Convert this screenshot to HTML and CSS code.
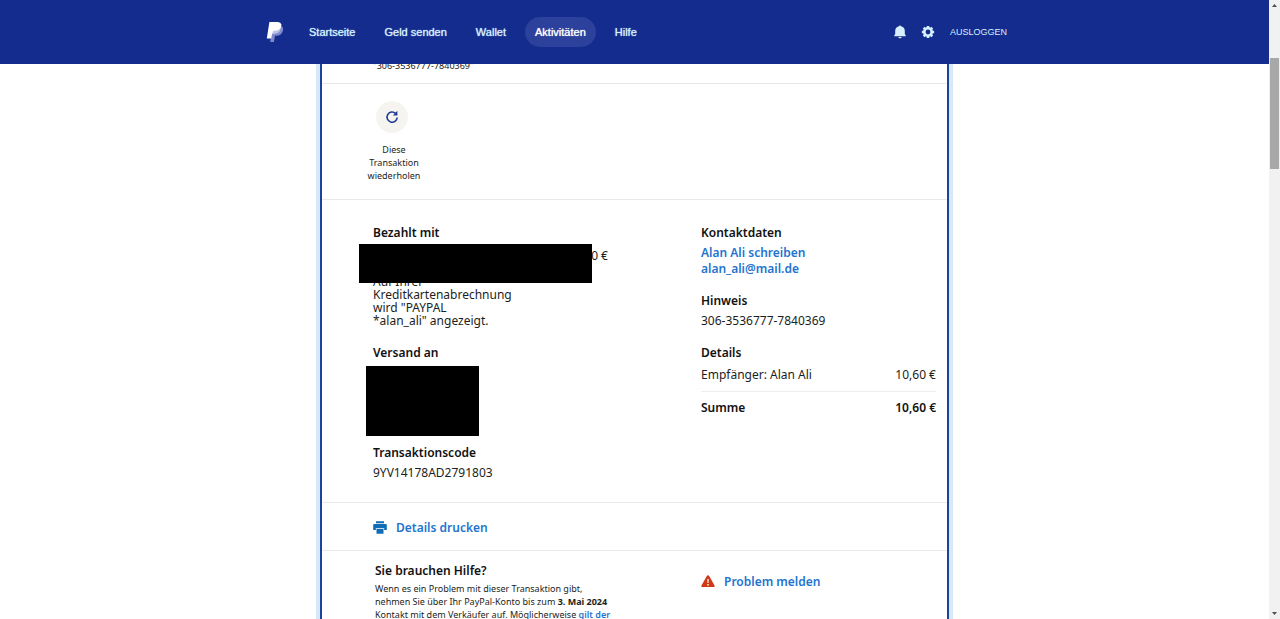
FILE: index.html
```html
<!DOCTYPE html>
<html lang="de">
<head>
<meta charset="utf-8">
<title>PayPal: Aktivitäten</title>
<link rel="stylesheet" href="styles.css">
</head>
<body>
<div class="window">
  <div class="page">
    <header class="topbar">
      <div class="topbar-inner">
        <a class="logo" href="#" aria-label="PayPal">
          <svg width="18" height="22" viewBox="0 0 18 22" aria-hidden="true">
            <path fill="#8088cc" d="M5.500 13 7 5h8.500c1.400 1 1.900 2.600 1.500 4.500-.8 3.600-3.300 5.200-6.800 5.200H9L7.900 21H4.200z"/>
            <path fill="#b9bfe6" d="M5.500 13 7 5h8c.2 5-2.600 8-7.400 8H5.500z"/>
            <path fill="#fff" d="M3.400 1h7.800c2.500 0 4 1 4.100 3H8.500L7 11.500H6.400L5.200 17.500H.8z"/>
            <path fill="#fff" d="M8 3h7.300c.2 4.500-2.400 6.800-6.500 6.800H6.500z"/>
          </svg>
        </a>
        <nav class="nav">
          <a href="#">Startseite</a>
          <a href="#">Geld senden</a>
          <a href="#">Wallet</a>
          <a class="active" href="#">Aktivitäten</a>
          <a href="#">Hilfe</a>
        </nav>
        <div class="tools">
          <button type="button" aria-label="Mitteilungen">
            <svg width="12" height="14" viewBox="0 0 12 14" aria-hidden="true"><path d="M6 .5c.6 0 1 .4 1.100.8C9.700 1.900 10.800 3.800 10.800 6v3l.9 1.200v1H.3v-1L1.200 9V6c0-2.200 1.100-4.100 3.700-4.700C5 .9 5.400.5 6 .5zM4.300 12h3.400c-.2.800-.8 1.300-1.700 1.300S4.500 12.800 4.300 12z"/></svg>
          </button>
          <button type="button" aria-label="Einstellungen">
            <svg width="14" height="14" viewBox="0 0 14 14" aria-hidden="true"><circle cx="7" cy="7" r="3.700" fill="none" stroke="#d5f0fc" stroke-width="2.600"/><path stroke="#d5f0fc" stroke-width="2.600" d="M7 .9v2M7 11.100v2M.9 7h2M11.100 7h2M2.700 2.700l1.400 1.400M9.900 9.900l1.400 1.400M2.700 11.300l1.400-1.400M9.900 4.100l1.400-1.400"/></svg>
          </button>
          <a class="logout" href="#">AUSLOGGEN</a>
        </div>
      </div>
    </header>
    <main class="content">
      <article class="card">
        <section class="note">"306-3536777-7840369"</section>
        <section class="repeat">
          <button type="button" class="repeat-button">
            <span class="repeat-icon">
              <svg width="14" height="14" viewBox="0 0 14 14" aria-hidden="true"><path fill="none" stroke="#1f3a93" stroke-width="1.600" d="M10.500 3.300A5.100 5.100 0 1 0 12.200 7.500"/><path fill="#1f3a93" d="M12.400.8v4.700H7.900l1.700-1.700 1.200-1.200z"/></svg>
            </span>
            <span>Diese Transaktion wiederholen</span>
          </button>
        </section>
        <section class="details">
          <div class="column">
            <div class="group paid">
              <h2>Bezahlt mit</h2>
              <p class="paid-amount">10,60 €</p>
              <p class="statement">Auf Ihrer Kreditkartenabrechnung wird "PAYPAL<br>*alan_ali" angezeigt.</p>
              <div class="redacted"></div>
            </div>
            <div class="group address">
              <h2>Versand an</h2>
              <div class="redacted-box"></div>
            </div>
            <div class="group">
              <h2>Transaktionscode</h2>
              <p>9YV14178AD2791803</p>
            </div>
          </div>
          <div class="column">
            <div class="group">
              <h2>Kontaktdaten</h2>
              <a href="#">Alan Ali schreiben</a>
              <a href="#">alan_ali@mail.de</a>
            </div>
            <div class="group">
              <h2>Hinweis</h2>
              <p>306-3536777-7840369</p>
            </div>
            <div class="group">
              <h2>Details</h2>
              <dl>
                <div class="row"><dt>Empfänger: Alan Ali</dt><dd>10,60 €</dd></div>
                <div class="row total"><dt>Summe</dt><dd>10,60 €</dd></div>
              </dl>
            </div>
          </div>
        </section>
        <section class="print">
          <a href="#">
            <svg width="14" height="14" viewBox="0 0 14 14" aria-hidden="true"><path fill="#0f6cb5" d="M3 .3h8v2H3zM1.500 3h11c.8 0 1.300.5 1.300 1.300V9h-2.600V7.300H2.800V9H.2V4.300C.2 3.500.7 3 1.500 3zM3.500 8.100h7v4.600h-7z"/></svg>
            Details drucken
          </a>
        </section>
        <section class="help">
          <div class="help-text">
            <h2>Sie brauchen Hilfe?</h2>
            <p>Wenn es ein Problem mit dieser Transaktion gibt, nehmen Sie über Ihr PayPal-Konto bis zum <strong>3. Mai 2024</strong> Kontakt mit dem Verkäufer auf. Möglicherweise <a href="#">gilt der</a></p>
          </div>
          <a class="report" href="#">
            <svg width="14" height="14" viewBox="0 0 14 14" aria-hidden="true"><path fill="#cf3a14" d="M7 .3c.6 0 .9.3 1.200.7l5.300 9.400c.5.900 0 1.700-.9 1.700H1.400c-.9 0-1.400-.8-.9-1.700L5.800 1c.3-.4.600-.7 1.200-.7z"/><path fill="#fff" d="M6.300 4h1.400l-.2 4H6.500zM6.300 9.100h1.400v1.400H6.300z"/></svg>
            Problem melden
          </a>
        </section>
      </article>
    </main>
  </div>
  <div class="scrollbar" aria-hidden="true">
    <svg width="11" height="11" viewBox="0 0 11 11"><path fill="#505050" d="M5.500 4 8 7H3z"/></svg>
    <div class="track"><div class="thumb"></div></div>
    <svg width="11" height="11" viewBox="0 0 11 11"><path fill="#505050" d="M3 4h5L5.500 7z"/></svg>
  </div>
</div>
</body>
</html>
```
FILE: styles.css
```css
* { box-sizing: border-box; }

body {
  margin: 0;
  background: #fff;
  color: #1c1e21;
  font: 12px/16px "Noto Sans", "Open Sans", sans-serif;
}

h2, p, dl, dd { margin: 0; }
h2 { font-size: 12px; line-height: 16px; font-weight: 600; color: #111; }
a { color: #2374cf; font-weight: 600; text-decoration: none; }
button { padding: 0; border: 0; background: none; font: inherit; color: inherit; cursor: pointer; }
svg { display: block; flex: none; }

.window { display: flex; height: 100vh; overflow: hidden; }
.page { flex: 1; display: flex; flex-direction: column; min-width: 0; }

.topbar { flex: none; position: relative; z-index: 1; background: #142c8e; font-family: "Liberation Sans", Arial, sans-serif; }
.topbar-inner { display: flex; align-items: center; max-width: 745px; height: 64px; margin: 0 auto; padding-left: 4px; }
.topbar a { color: #d5f0fc; font-size: 11px; font-weight: 400; }
.nav { display: flex; gap: 9px; margin-left: 15px; }
.nav a { padding: 7px 10px; border-radius: 16px; }
.topbar .nav .active { background: #2b419b; color: #fff; }
.nav a { text-shadow: 0 0 1px currentColor; }
.tools { display: flex; align-items: center; gap: 15px; margin-left: auto; fill: #d5f0fc; }
.topbar .logout { font-size: 9px; }

.content { flex: 1; min-height: 0; }
.card {
  max-width: 629px;
  margin: -8px auto 0;
  border: 2px solid #1a449a;
  border-top: 0;
  box-shadow: 0 0 0 4px #d8e8f9;
}
.card > section { border-bottom: 1px solid #e9e9e9; padding-left: 51px; }

.note { padding-top: 3px; padding-bottom: 11px; font-size: 9px; line-height: 13px; }

.card > .repeat { padding: 17px 0 16px 44px; }
.repeat-button { width: 56px; font-size: 9px; line-height: 13px; text-align: center; }
.repeat-icon {
  display: flex;
  align-items: center;
  justify-content: center;
  width: 32px;
  height: 32px;
  margin: 0 0 10px 10px;
  border-radius: 50%;
  background: #f5f4f0;
}

.details { display: grid; grid-template-columns: 235px 235px; gap: 93px; padding-top: 25px; padding-bottom: 21px; }
.group { margin-bottom: 16px; }
.group:last-child { margin-bottom: 0; }
.group h2 { margin-bottom: 4px; }
.group a { display: block; }

.column .paid { position: relative; margin-bottom: 18px; }
.paid-amount { margin-bottom: 11px; padding-top: 3px; text-align: right; }
.statement { width: 140px; line-height: 13px; }
.redacted { position: absolute; top: 19px; left: -14px; width: 233px; height: 39px; background: #000; }
.redacted-box { width: 113px; height: 70px; margin: 0 0 9px -7px; background: #000; }
.column .address { margin-bottom: 8px; }
.address h2 { margin-bottom: 5px; }

.row { display: flex; justify-content: space-between; }
.row { padding: 2px 0 8px; border-bottom: 1px solid #eee; }
.total { padding: 8px 0; border: 0; font-weight: 600; color: #111; }

.print { display: flex; padding-top: 17px; padding-bottom: 14px; }
.print a, .report { display: flex; align-items: center; gap: 9px; }

.help { display: grid; grid-template-columns: 240px 1fr; gap: 88px; align-items: start; padding-top: 12px; padding-bottom: 32px; }
.help-text { padding-left: 2px; }
.help-text p { margin-top: 3px; font-size: 9px; line-height: 13px; }
.report { margin-top: 11px; }

.scrollbar { flex: none; display: flex; flex-direction: column; width: 11px; background: #f1f1f1; }
.track { flex: 1; padding: 47px 1px 0; }
.thumb { height: 111px; background: #a8a8a8; }
```
